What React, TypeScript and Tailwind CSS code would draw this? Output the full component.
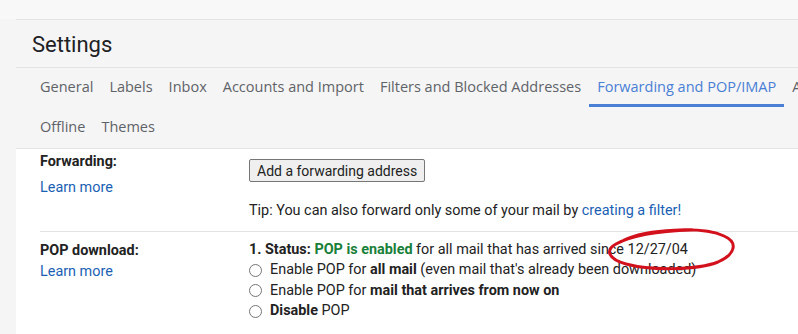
import React from "react";

const tabs1 = [
  "General",
  "Labels",
  "Inbox",
  "Accounts and Import",
  "Filters and Blocked Addresses",
  "Forwarding and POP/IMAP",
  "Add-ons",
];
const tabs2 = ["Offline", "Themes"];

function Tab({ label, active }: { label: string; active?: boolean }) {
  return (
    <div
      className={
        "relative h-[40px] px-[8px] pb-[2px] flex items-center whitespace-nowrap text-[14.5px] " +
        (active ? "text-[#4a7fd6]" : "text-[#5f6368]")
      }
      style={{ fontFamily: "'Open Sans', Roboto, sans-serif" }}
    >
      {label}
      {active && (
        <div className="absolute left-0 right-0 bottom-[1px] h-[3px] bg-[#4a7fd6]" />
      )}
    </div>
  );
}

function Radio({ children }: { children: React.ReactNode }) {
  return (
    <div className="h-[20.5px] flex items-center">
      <span className="w-[13px] h-[13px] rounded-full border border-[#757575] bg-white mr-[8px]" />
      <span>{children}</span>
    </div>
  );
}

export default function App() {
  return (
    <div
      className="w-[798px] h-[334px] overflow-hidden relative bg-[#f5f5f5]"
      style={{ fontFamily: "Roboto, 'Liberation Sans', sans-serif" }}
    >
      <div className="h-[19px] bg-[#f8f8f8]" />
      <div className="ml-[16px] border-t border-[#e3e3e3]">
        <div className="h-[47px] pl-[16px] flex items-center text-[22px] text-[#202124] pt-[2px]">
          Settings
        </div>
        <div className="border-t border-[#e3e3e3] pl-[16px] flex flex-col">
          <div className="flex">
            {tabs1.map((t) => (
              <Tab key={t} label={t} active={t === "Forwarding and POP/IMAP"} />
            ))}
          </div>
          <div className="flex">
            {tabs2.map((t) => (
              <Tab key={t} label={t} />
            ))}
          </div>
        </div>
        <div className="border-t border-[#e3e3e3] bg-white h-[200px] pl-[24px] text-[14.4px] text-[#222]">
          <div className="flex border-b border-[#e3e3e3] h-[83px]">
            <div className="w-[209px] flex flex-col leading-[24px] pt-[1px]">
              <span className="font-bold">Forwarding:</span>
              <span className="text-[#1a5fb4] mt-[2px]">Learn more</span>
            </div>
            <div className="flex flex-col pt-[10px]">
              <div className="flex">
                <button className="h-[23px] px-[7px] bg-[#efefef] border border-[#767676] rounded-[2px] text-[14px] text-[#222] leading-[20px]">
                  Add a forwarding address
                </button>
              </div>
              <div className="mt-[20px] leading-[17px]">
                Tip: You can also forward only some of your mail by{" "}
                <span className="text-[#1a5fb4]">creating a filter!</span>
              </div>
            </div>
          </div>
          <div className="flex pt-[8px]">
            <div className="w-[209px] flex flex-col leading-[21px]">
              <span className="font-bold">POP download:</span>
              <span className="text-[#1a5fb4]">Learn more</span>
            </div>
            <div className="flex flex-col">
              <div className="leading-[20px]">
                <span className="font-bold">1. Status: </span>
                <span className="font-bold text-[#188038]">POP is enabled</span> for all mail that has arrived since 12/27/04
              </div>
              <Radio>
                Enable POP for <b>all mail</b> (even mail that's already been downloaded)
              </Radio>
              <Radio>
                Enable POP for <b>mail that arrives from now on</b>
              </Radio>
              <Radio>
                <b>Disable</b> POP
              </Radio>
            </div>
          </div>
        </div>
      </div>
      <svg
        className="absolute left-[602px] top-[224px] pointer-events-none"
        width="140"
        height="52"
        viewBox="0 0 140 52"
      >
        <path
          d="M22 16 C45 5 100 2 122 12 C136 18 134 30 116 38 C96 46 50 47 24 40 C6 35 3 26 14 20 C30 11 60 7 90 6"
          fill="none"
          stroke="#d3111c"
          strokeWidth="3"
          strokeLinecap="round"
        />
      </svg>
    </div>
  );
}
